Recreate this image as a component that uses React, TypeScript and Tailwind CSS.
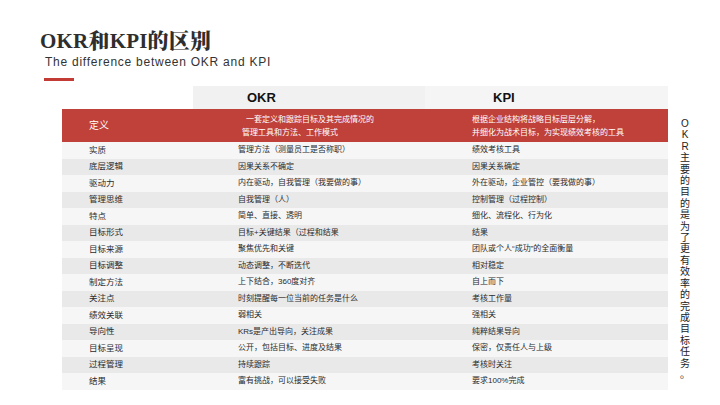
const rows: Array<{ label: string; okr: string; kpi: string; indent?: string }> = [
  { label: '实质', okr: '管理方法（测量员工是否称职）', kpi: '绩效考核工具' },
  { label: '底层逻辑', okr: '因果关系不确定', kpi: '因果关系确定' },
  { label: '驱动力', okr: '内在驱动，自我管理（我要做的事）', kpi: '外在驱动，企业管控（要我做的事）' },
  { label: '管理思维', okr: '自我管理（人）', kpi: '控制管理（过程控制）' },
  { label: '特点', okr: '简单、直接、透明', kpi: '细化、流程化、行为化' },
  { label: '目标形式', okr: '目标+关键结果（过程和结果', kpi: '结果' },
  { label: '目标来源', okr: '聚焦优先和关键', kpi: '团队或个人“成功”的全面衡量' },
  { label: '目标调整', okr: '动态调整，不断迭代', kpi: '相对稳定', indent: 'pl-[4px]' },
  { label: '制定方法', okr: '上下结合，360度对齐', kpi: '自上而下' },
  { label: '关注点', okr: '时刻提醒每一位当前的任务是什么', kpi: '考核工作量', indent: 'pl-[4px]' },
  { label: '绩效关联', okr: '弱相关', kpi: '强相关', indent: 'pl-[6px]' },
  { label: '导向性', okr: 'KRs是产出导向，关注成果', kpi: '纯粹结果导向', indent: 'pl-[2px]' },
  { label: '目标呈现', okr: '公开，包括目标、进度及结果', kpi: '保密，仅责任人与上级' },
  { label: '过程管理', okr: '持续跟踪', kpi: '考核时关注' },
  { label: '结果', okr: '富有挑战，可以接受失败', kpi: '要求100%完成' },
]

const sideNote = 'OKR主要的目的是为了更有效率的完成目标任务。'

const font = "font-['Liberation_Sans','Noto_Sans_CJK_SC',sans-serif]"

export default function App() {
  return (
    <div className={`relative h-[405px] w-[720px] overflow-hidden bg-white text-[#333] ${font}`}>
      <header className="pl-[40px] pt-[28px]">
        <h1 className="font-['Liberation_Serif','Noto_Serif_CJK_SC','Noto_Sans_CJK_SC',serif] text-[21px] font-black leading-[26px] tracking-[0.2px] text-[#2e2e2e]">
          OKR和KPI的区别
        </h1>
        <p className="mt-[1px] pl-[5px] text-[12px] leading-[14px] tracking-[0.75px] text-[#333]">The difference between OKR and KPI</p>
        <div className="ml-[4px] mt-[9px] h-[3px] w-[30px] bg-[#c23c35]" />
      </header>

      <div className="mt-[5px] flex items-start">
        <div className="ml-[62px] w-[606px]">
          <div className="flex h-[23px] items-center">
            <div className="w-[131px]" />
            <div className="flex h-full w-[232px] items-center bg-[#f1f1f1] pl-[54px] text-[13px] font-bold text-[#111]">OKR</div>
            <div className="flex h-full w-[243px] items-center bg-[#f5f5f5] pl-[68px] text-[13px] font-bold text-[#111]">KPI</div>
          </div>

          <div className="flex h-[33px] items-center bg-[#c0403a] text-white">
            <div className="w-[131px] pl-[27px] text-[10px]">定义</div>
            <div className="w-[232px] pl-[49px] text-[8px] leading-[13px]">
              <p className="pl-[4px]">一套定义和跟踪目标及其完成情况的</p>
              <p>管理工具和方法、工作模式</p>
            </div>
            <div className="w-[243px] pl-[47px] text-[8px] leading-[13px]">
              <p>根据企业结构将战略目标层层分解，</p>
              <p>并细化为战术目标，为实现绩效考核的工具</p>
            </div>
          </div>

          {rows.map((row, i) => (
            <div key={row.label} className={`flex h-[16.5px] items-center text-[8px] text-[#2b2b2b] ${i % 2 === 0 ? 'bg-[#f6f6f6]' : 'bg-[#e9e9e9]'}`}>
              <div className="w-[131px] pl-[27px] text-[8.5px]">{row.label}</div>
              <div className={`w-[232px] pl-[45px] ${row.indent ?? ''}`}>{row.okr}</div>
              <div className="w-[243px] pl-[47px]">{row.kpi}</div>
            </div>
          ))}
        </div>

        <div className="ml-[11px] mt-[32px] flex w-[12px] flex-col items-center text-[10px] leading-[11.4px] text-[#222]">
          {Array.from(sideNote).map((ch, i) => (
            <span key={i}>{ch}</span>
          ))}
        </div>
      </div>
    </div>
  )
}
